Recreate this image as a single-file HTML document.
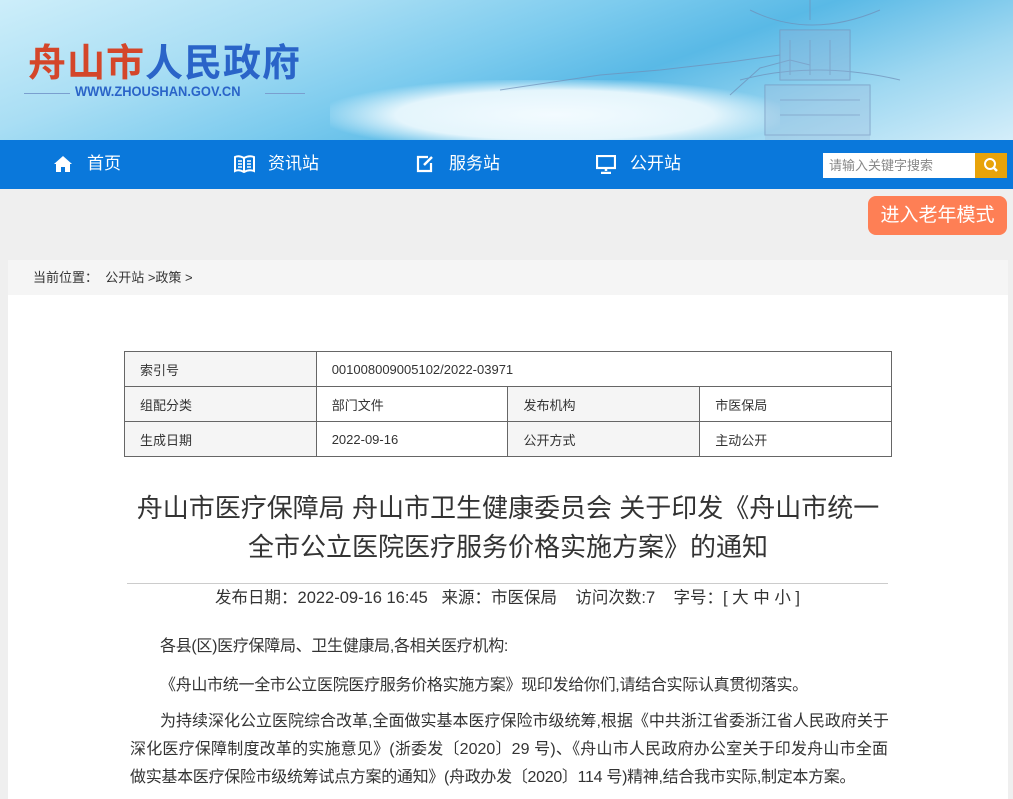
<!DOCTYPE html>
<html><head><meta charset="utf-8"><style>
*{margin:0;padding:0;box-sizing:border-box}
body{width:1013px;height:799px;overflow:hidden;background:#efefef;font-family:"Liberation Sans","Noto Sans CJK SC",sans-serif;color:#333}
.hd{position:absolute;left:0;top:0;width:1013px;height:140px;background:linear-gradient(160deg,#cdeefa 0%,#a9def4 25%,#7ccbee 45%,#59b9e6 60%,#9fd8f1 80%,#d4eefa 100%);overflow:hidden}
.sea{position:absolute;left:330px;top:80px;width:450px;height:70px;background:radial-gradient(ellipse at center,#f3fbff 0%,#e4f5fc 50%,rgba(220,242,252,0) 75%)}
.logo{position:absolute;left:28px;top:32px;font-size:38px;font-weight:bold;letter-spacing:1px;font-family:"Noto Sans CJK SC",sans-serif}
.logo .r{color:#d4462a}.logo .b{color:#2a64c8}
.url{position:absolute;left:75px;top:83px;font-size:14px;font-weight:bold;color:#2a64c8;transform:scaleX(.92);transform-origin:left}
.ln{position:absolute;top:93px;height:1px;background:#7a9fcf}
.nav{position:absolute;left:0;top:140px;width:1013px;height:49px;background:#0a78db}
.ni{position:absolute;top:13px;color:#fff;font-size:17px;line-height:22px}
.ni svg{position:absolute;top:2px}
.srch{position:absolute;left:823px;top:153px;width:152px;height:25px;background:#fff;font-size:13px;color:#888;padding:5px 6px;line-height:16px}
.sb{position:absolute;left:975px;top:153px;width:32px;height:25px;background:#e8a30a}
.old{position:absolute;left:868px;top:196px;width:139px;height:39px;background:#fe7f55;border-radius:8px;color:#fff;font-size:19px;line-height:39px;text-align:center}
.bc{position:absolute;left:8px;top:260px;width:1000px;height:35px;background:#f5f5f5;font-size:13px;line-height:35px;padding-left:25px}
.main{position:absolute;left:8px;top:295px;width:1000px;height:504px;background:#fff}
table{position:absolute;left:124px;top:351px;width:768px;border-collapse:collapse;font-size:13px}
td{border:1px solid #666;height:35px;padding-left:15px;width:192px}
td.l{background:#f5f5f5}
.t{position:absolute;left:100px;width:816px;top:489px;text-align:center;font-size:26px;line-height:39px;color:#333}
.hr{position:absolute;left:127px;top:583px;width:761px;height:1px;background:#ccc}
.meta{position:absolute;left:127px;width:761px;top:587px;text-align:center;font-size:16.5px;line-height:22px}
.p{position:absolute;left:130px;width:760px;font-size:16px;line-height:28px;letter-spacing:-0.3px;white-space:nowrap}
.j{display:block;width:758px;text-align:justify;text-align-last:justify;letter-spacing:0}
</style></head><body>
<div class="hd"><div class="sea"></div>
<svg style="position:absolute;left:480px;top:0" width="533" height="140"><g fill="none" stroke="#6f8fb8" stroke-width="1" opacity=".7">
<path d="M20 90 L120 75 L180 70 L250 62 L300 55"/><path d="M250 95 L280 68 L310 60 L330 65"/>
<path d="M270 10 Q330 40 400 10"/><path d="M300 30 L370 30 L370 80 L300 80Z"/><path d="M260 80 Q335 60 420 80"/>
<path d="M285 85 L390 85 L390 135 L285 135Z"/><path d="M310 40 L310 75 M330 40 L330 75 M350 40 L350 75"/><path d="M300 100 L380 100 M300 115 L380 115"/>
<path d="M330 0 L330 20"/></g>
<rect x="300" y="30" width="70" height="50" fill="#8fb3d6" opacity=".35"/><rect x="285" y="85" width="105" height="55" fill="#9fbedc" opacity=".35"/></svg>
<div class="logo"><span class="r">舟山市</span><span class="b">人民政府</span></div>
<div class="ln" style="left:24px;width:46px"></div><div class="url">WWW.ZHOUSHAN.GOV.CN</div><div class="ln" style="left:265px;width:40px"></div>
</div>
<div class="nav">
<div class="ni" style="left:53px"><svg width="20" height="18" viewBox="0 0 20 18"><path d="M10 1 L1 9 L3 9 L3 17 L8 17 L8 12 L12 12 L12 17 L17 17 L17 9 L19 9Z" fill="#fff"/></svg><span style="margin-left:34px">首页</span></div>
<div class="ni" style="left:234px"><svg width="21" height="18" viewBox="0 0 21 18"><path d="M10 3 Q5 0 1 2 L1 16 Q5 14 10 17 Q15 14 20 16 L20 2 Q15 0 10 3Z M10 3 L10 17" fill="none" stroke="#fff" stroke-width="2"/><path d="M4 6h4M4 9h4M4 12h4M13 6h4M13 9h4M13 12h4" stroke="#fff" stroke-width="1.5"/></svg><span style="margin-left:34px">资讯站</span></div>
<div class="ni" style="left:416px"><svg width="18" height="18" viewBox="0 0 18 18"><path d="M12 2 L2 2 L2 16 L15 16 L15 8" fill="none" stroke="#fff" stroke-width="2.2"/><path d="M8 10 L16 2" stroke="#fff" stroke-width="2.5"/></svg><span style="margin-left:33px">服务站</span></div>
<div class="ni" style="left:596px"><svg width="20" height="19" viewBox="0 0 20 19"><rect x="1" y="1" width="18" height="12" fill="none" stroke="#fff" stroke-width="2.2"/><path d="M10 13v3M5 18h10" stroke="#fff" stroke-width="2.5"/></svg><span style="margin-left:34px">公开站</span></div>
</div>
<div class="srch">请输入关键字搜索</div>
<div class="sb"><svg width="32" height="25"><circle cx="15" cy="11" r="5" fill="none" stroke="#fff" stroke-width="2"/><path d="M18.5 14.5 L22 18" stroke="#fff" stroke-width="2.5"/></svg></div>
<div class="old">进入老年模式</div>
<div class="bc">当前位置： &nbsp;公开站 &gt;政策 &gt;</div>
<div class="main"></div>
<table>
<tr><td class="l">索引号</td><td colspan="3">001008009005102/2022-03971</td></tr>
<tr><td class="l">组配分类</td><td>部门文件</td><td class="l">发布机构</td><td>市医保局</td></tr>
<tr><td class="l">生成日期</td><td>2022-09-16</td><td class="l">公开方式</td><td>主动公开</td></tr>
</table>
<div class="t">舟山市医疗保障局 舟山市卫生健康委员会 关于印发《舟山市统一<br>全市公立医院医疗服务价格实施方案》的通知</div>
<div class="hr"></div>
<div class="meta">发布日期：2022-09-16 16:45 &nbsp;&nbsp;来源：市医保局 &nbsp;&nbsp;&nbsp;访问次数:7 &nbsp;&nbsp;&nbsp;字号：[ 大 中 小 ]</div>
<div class="p" style="top:633px;padding-left:30px">各县(区)医疗保障局、卫生健康局,各相关医疗机构:</div>
<div class="p" style="top:672px;padding-left:30px">《舟山市统一全市公立医院医疗服务价格实施方案》现印发给你们,请结合实际认真贯彻落实。</div>
<div class="p" style="top:708px">
<span class="j" style="width:728px;margin-left:30px">为持续深化公立医院综合改革,全面做实基本医疗保险市级统筹,根据《中共浙江省委浙江省人民政府关于</span>
<span class="j">深化医疗保障制度改革的实施意见》(浙委发〔2020〕29 号)、《舟山市人民政府办公室关于印发舟山市全面</span>
<span style="display:block">做实基本医疗保险市级统筹试点方案的通知》(舟政办发〔2020〕114 号)精神,结合我市实际,制定本方案。</span>
</div>
</body></html>
